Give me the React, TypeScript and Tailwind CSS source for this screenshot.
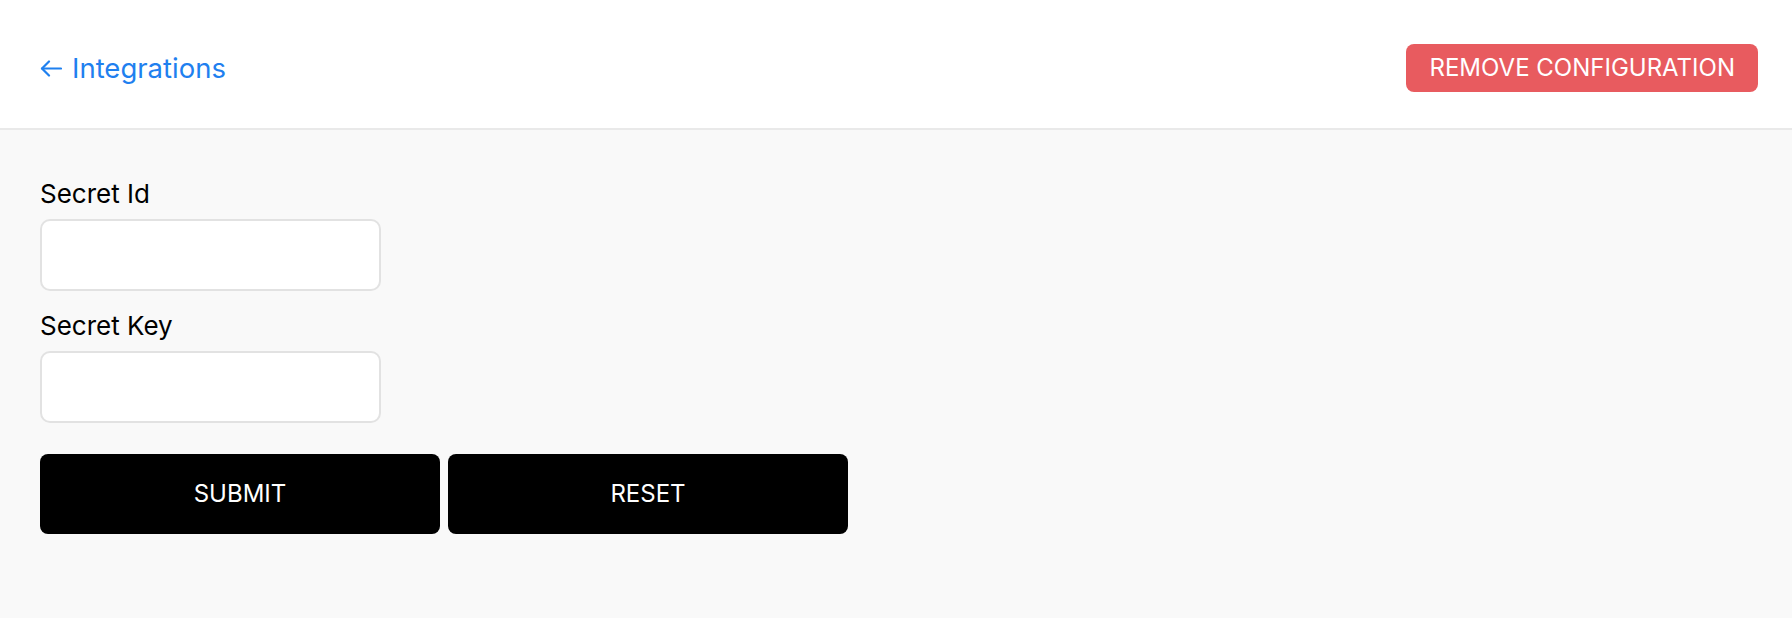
import React from "react";

const ArrowLeft = () => (
    <svg width="22" height="17" viewBox="0 0 22 17" fill="none" stroke="currentColor" strokeWidth="2.2" strokeLinecap="round" strokeLinejoin="round">
        <path d="M21 8.5H2" />
        <path d="M9 1.5L2 8.5l7 7" />
    </svg>
)

const Field = ({ label, className }: { label: string; className?: string }) => (
    <div className={className}>
        <label className="block text-[26px] leading-[32px] text-black">{label}</label>
        <input
            type="text"
            className="mt-[9px] block w-[341px] h-[72px] bg-white border-2 border-[#e2e2e2] rounded-[10px] px-4 text-[24px] outline-none"
        />
    </div>
)

export default function App() {
    return (
        <div className="min-h-screen bg-[#f9f9f9] font-['Inter',sans-serif]">
            <header className="h-[130px] bg-white border-b-2 border-[#e9e9e9] flex items-center justify-between pl-10 pr-[34px] pt-2">
                <a href="#" className="flex items-center gap-[10px] text-[#1f80ef] text-[27.5px] leading-[40px]">
                    <ArrowLeft />
                    <span>Integrations</span>
                </a>
                <button className="h-12 px-[23px] rounded-lg bg-[#e85b5f] text-white text-[24px] leading-none">
                    REMOVE CONFIGURATION
                </button>
            </header>
            <main className="pl-10 pt-12">
                <Field label="Secret Id" />
                <Field label="Secret Key" className="mt-[19px]" />
                <div className="mt-[31px] flex gap-2">
                    <button className="w-[400px] h-20 bg-black text-white rounded-lg text-[24px]">SUBMIT</button>
                    <button className="w-[400px] h-20 bg-black text-white rounded-lg text-[24px]">RESET</button>
                </div>
            </main>
        </div>
    )
}
